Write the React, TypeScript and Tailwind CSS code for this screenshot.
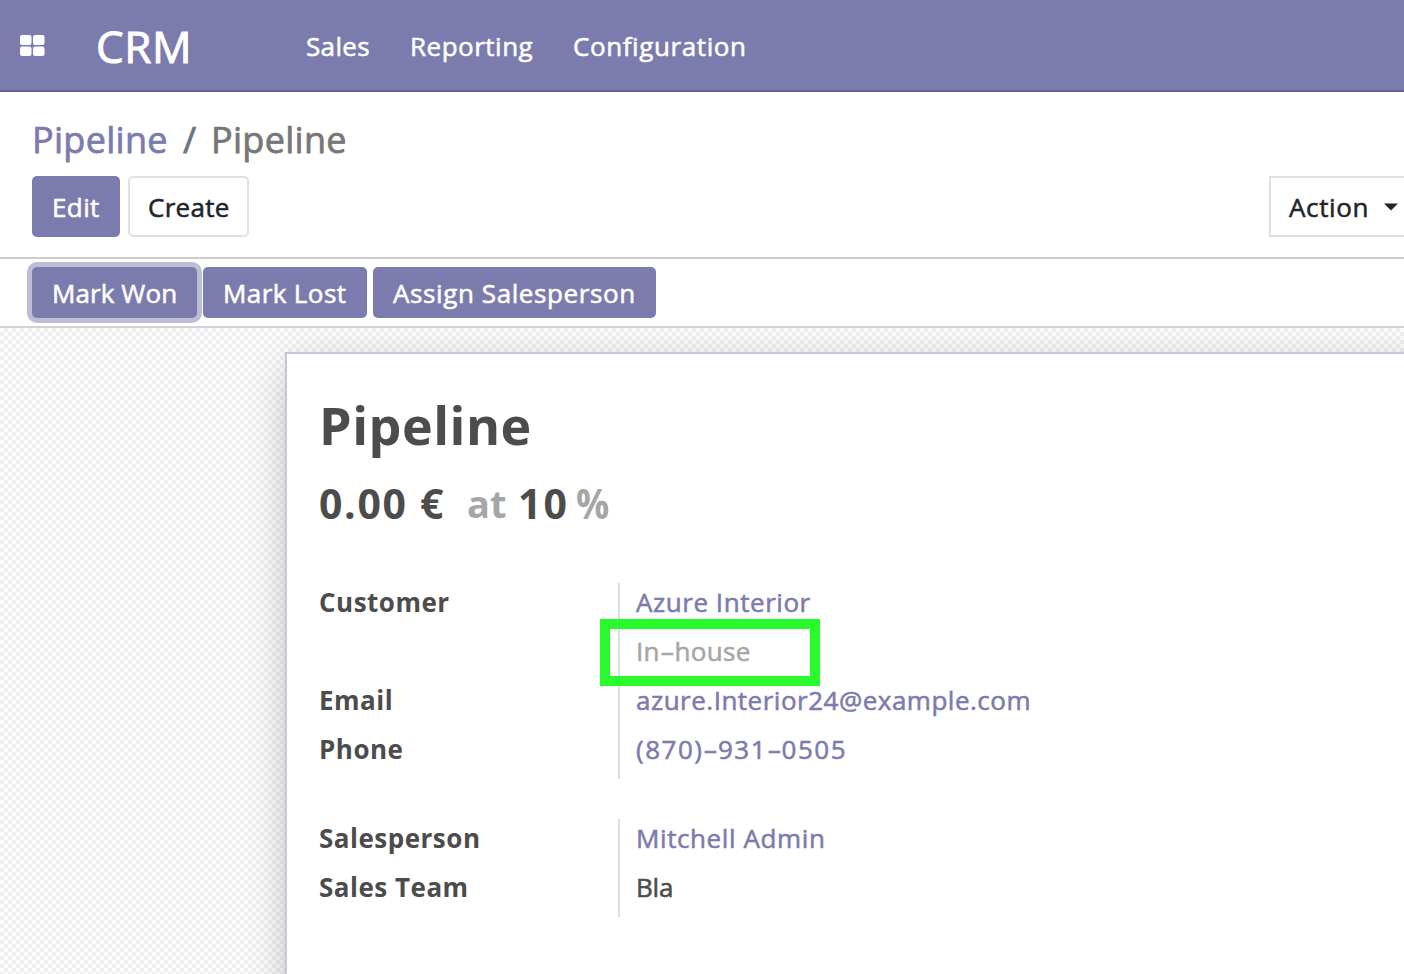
import type { ReactNode } from "react";

function Field({ label, children }: { label?: string; children: ReactNode }) {
  return (
    <div className="flex h-[49px] leading-[39px]">
      <div className="w-[299px] font-bold tracking-[0.5px] [-webkit-text-stroke:0px]">{label}</div>
      <div className="border-l-2 border-[#dddddd] pl-4">{children}</div>
    </div>
  );
}

function Dash() {
  return <span className="inline-block w-[14.5px] scale-x-[1.7] text-center tracking-normal">-</span>;
}

const primary = "flex items-center rounded-[5px] bg-[#7c7bad] pt-[2px] pl-5 text-white";

export default function App() {
  return (
    <div className="flex h-[974px] w-full flex-col overflow-hidden whitespace-nowrap bg-white font-['Open_Sans','Noto_Sans',sans-serif] text-[26px] text-[#4c4c4c] [-webkit-text-stroke:0.55px]">
      <header className="flex h-[92px] shrink-0 items-center border-b-2 border-[#5f5e97] bg-[#7c7bad] pt-[2px] pl-5 text-white">
        <svg width="25" height="22" viewBox="0 0 25 22" fill="currentColor">
          <rect x="0" y="0" width="11.5" height="10" rx="2" />
          <rect x="13" y="0" width="11.5" height="10" rx="2" />
          <rect x="0" y="11.5" width="11.5" height="9.5" rx="2" />
          <rect x="13" y="11.5" width="11.5" height="9.5" rx="2" />
        </svg>
        <div className="ml-[51px] w-[210px] text-[44px] tracking-[0.6px] [-webkit-text-stroke:1px]">CRM</div>
        <nav className="flex">
          <a className="w-[104px] tracking-[0.35px]">Sales</a>
          <a className="w-[163px] tracking-[0.5px]">Reporting</a>
          <a className="tracking-[0.6px]">Configuration</a>
        </nav>
      </header>

      <section className="h-[167px] shrink-0 border-b-2 border-[#cccccc] pt-[30px] pl-8">
        <div className="flex h-9 items-center text-[36px] leading-9 tracking-[0.3px] [-webkit-text-stroke:0.75px]">
          <a className="w-[151px] text-[#7c7bad]">Pipeline</a>
          <span className="w-[28px] text-[#6c757d]">/</span>
          <span className="text-[#777777]">Pipeline</span>
        </div>
        <div className="mt-[18px] flex h-[61px]">
          <button className={primary + " w-[88px] tracking-[0.4px]"}>Edit</button>
          <button className="ml-2 flex w-[121px] items-center rounded-[5px] border-2 border-[#dee2e6] pt-[2px] pl-[18px] tracking-[0.3px] text-[#212529]">Create</button>
          <button className="ml-auto flex w-[135px] shrink-0 items-center border-2 border-r-0 border-[#dee2e6] pt-[2px] pl-[18px] tracking-[0.65px] text-[#212529]">
            Action
            <svg className="mb-[2px] ml-[15px]" width="14" height="8" viewBox="0 0 14 8" fill="currentColor" stroke="none">
              <path d="M0 0.5H14L7 7.5Z" />
            </svg>
          </button>
        </div>
      </section>

      <section className="flex h-[69px] shrink-0 gap-[6px] border-b-2 border-[#ced4da] pt-2 pb-2 pl-8">
        <button className={primary + " w-[165px] tracking-[0.1px] ring-[5px] ring-[#bebdd6]"}>Mark Won</button>
        <button className={primary + " relative w-[164px] tracking-[0.4px]"}>Mark Lost</button>
        <button className={primary + " w-[283px] tracking-[0.6px]"}>Assign Salesperson</button>
      </section>

      <main className="min-h-0 flex-1 overflow-hidden bg-white bg-[conic-gradient(#eeeeee_25%,#fbfbfb_0_50%,#eeeeee_0_75%,#fbfbfb_0)] bg-[length:8px_8px] pt-6 pl-[285px]">
        <div className="h-[700px] w-[1300px] border-2 border-[#c8c7d8] bg-white pl-8 shadow-[0_10px_40px_-10px_rgba(0,0,0,0.32)]">
          <h1 className="mt-[35px] h-[72px] text-[52px] leading-[72px] font-bold tracking-[0.5px] [-webkit-text-stroke:0px]">Pipeline</h1>
          <div className="mt-[12px] flex h-[60px] text-[41px] leading-[60px] font-bold [-webkit-text-stroke:0px]">
            <span className="w-[148px] tracking-[1.67px]">0.00 €</span>
            <span className="w-[51px] text-[38px] text-[#a6a6a6]">at</span>
            <span className="w-[58px] tracking-[2px]">10</span>
            <span className="origin-left scale-x-[0.9] text-[#a6a6a6]">%</span>
          </div>
          <div className="mt-[50px]">
            <Field label="Customer"><a className="tracking-[0.55px] text-[#7c7bad]">Azure Interior</a></Field>
            <Field><span className="tracking-[0.35px] text-[#a6a6a6]">In<Dash />house</span></Field>
            <Field label="Email"><a className="tracking-[0.5px] text-[#7c7bad]">azure.Interior24@example.com</a></Field>
            <Field label="Phone"><a className="tracking-[1.5px] text-[#7c7bad]">(870)<Dash />931<Dash />0505</a></Field>
          </div>
          <div className="mt-10">
            <Field label="Salesperson"><a className="tracking-[0.6px] text-[#7c7bad]">Mitchell Admin</a></Field>
            <Field label="Sales Team"><span className="tracking-[-0.2px]">Bla</span></Field>
          </div>
        </div>
      </main>
      <div className="absolute top-[619px] left-[600px] h-[67px] w-[220px] border-[10px] border-[#28fa2c]" />
    </div>
  );
}
